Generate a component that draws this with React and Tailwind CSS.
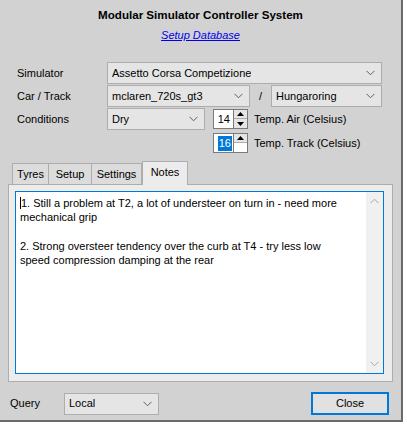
import React from 'react';

const font = { fontFamily: '"Liberation Sans", Arial, sans-serif' };

function Chevron({ dir = 'down', className = '' }) {
  return (
    <svg width="9" height="6" viewBox="0 0 9 6" className={className}>
      <polyline
        points={dir === 'down' ? '0.5,0.8 4.5,4.8 8.5,0.8' : '0.5,5.2 4.5,1.2 8.5,5.2'}
        fill="none"
        stroke="currentColor"
        strokeWidth="1"
      />
    </svg>
  );
}

function Select({ value, className = '' }) {
  return (
    <div className={`h-[22px] flex items-center justify-between bg-[#e5e5e5] border border-[#adadad] pl-[4px] pr-[6px] text-black ${className}`}>
      <span className="truncate">{value}</span>
      <Chevron className="text-[#606060] shrink-0" />
    </div>
  );
}

function Arrow({ up }) {
  return (
    <svg width="7" height="4" viewBox="0 0 7 4">
      <polygon points={up ? '0,4 3.5,0 7,4' : '0,0 3.5,4 7,0'} fill="#000" />
    </svg>
  );
}

function Spin({ value, selected, partial }) {
  return (
    <div className="flex h-[20px]">
      <div className="w-[20px] h-full bg-white border border-[#7a7a7a] border-r-0 flex items-center justify-end pr-[1px]">
        <span className={selected ? 'bg-[#0078d7] text-white px-[1px] leading-[15px]' : 'pr-[2px]'}>{value}</span>
      </div>
      <div className="w-[15px] h-full border border-[#7a7a7a] flex flex-col bg-white">
        <div className="h-[9px] bg-[#e5e5e5] border-b border-[#adadad] flex items-center justify-center">
          <Arrow up />
        </div>
        {partial ? (
          <div className="flex-1 bg-white" />
        ) : (
          <div className="flex-1 bg-[#e5e5e5] flex items-center justify-center">
            <Arrow />
          </div>
        )}
      </div>
    </div>
  );
}

export default function App() {
  return (
    <div className="w-[407px] h-[424px] flex bg-white overflow-hidden text-[11px]" style={font}>
      <div className="w-[403px] h-[422px] bg-[#d2d2d2] border-r-2 border-b-2 border-[#6a6a6a] flex flex-col text-black">
        {/* Header */}
        <div className="pt-[7px] text-center text-[11.6px] font-bold leading-[16px]">
          Modular Simulator Controller System
        </div>
        <div className="mt-[5px] text-center text-[11px] leading-[14px] italic underline text-[#0000ee]">
          Setup Database
        </div>

        {/* Form */}
        <div className="mt-[20px] pl-[17px] pr-[19px] flex flex-col gap-[1px]">
          <div className="flex items-center">
            <span className="w-[90px]">Simulator</span>
            <Select value="Assetto Corsa Competizione" className="flex-1" />
          </div>
          <div className="flex items-center">
            <span className="w-[90px]">Car / Track</span>
            <Select value="mclaren_720s_gt3" className="w-[143px]" />
            <span className="w-[21px] text-center">/</span>
            <Select value="Hungaroring" className="flex-1" />
          </div>
          <div className="flex items-center">
            <span className="w-[90px]">Conditions</span>
            <Select value="Dry" className="w-[98px]" />
            <div className="ml-[8px]">
              <Spin value="14" />
            </div>
            <span className="ml-[6px]">Temp. Air (Celsius)</span>
          </div>
          <div className="flex items-center mt-[2px]">
            <span className="w-[196px]" />
            <Spin value="16" selected partial />
            <span className="ml-[6px]">Temp. Track (Celsius)</span>
          </div>
        </div>

        {/* Tabs */}
        <div className="mt-[7px] px-[8px]">
          <div className="flex items-end h-[24px] pl-[4px]">
            <div className="w-[37px] h-[21px] flex items-center justify-center bg-[#dcdcdc] border border-b-0 border-[#adadad]">Tyres</div>
            <div className="w-[43px] h-[21px] flex items-center justify-center bg-[#dcdcdc] border border-l-0 border-b-0 border-[#adadad]">Setup</div>
            <div className="w-[50px] h-[21px] flex items-center justify-center bg-[#dcdcdc] border border-l-0 border-b-0 border-[#adadad]">Settings</div>
            <div className="w-[46px] h-[24px] flex items-center justify-center bg-[#ececec] border border-b-0 border-[#adadad] relative top-[1px] pb-[3px]">Notes</div>
          </div>
          <div className="h-[198px] bg-[#ececec] border border-[#adadad] pt-[6px] pl-[6px] pr-[8px] pb-[7px]">
            <div className="h-full border border-[#0078d7] bg-white flex">
              <div className="flex-1 pl-[4px] pr-[14px] pt-[4px] leading-[14.3px]">
                <p>
                  <span className="border-l border-black" />1. Still a problem at T2, a lot of understeer on turn in - need more mechanical grip
                </p>
                <p className="mt-[14.3px]">
                  2. Strong oversteer tendency over the curb at T4 - try less low speed compression damping at the rear
                </p>
              </div>
              <div className="w-[17px] bg-[#f0f0f0] flex flex-col items-center justify-between py-[6px] text-[#a8a8a8]">
                <Chevron dir="up" />
                <Chevron dir="down" />
              </div>
            </div>
          </div>
        </div>

        {/* Bottom */}
        <div className="mt-[10px] flex items-center pl-[10px] pr-[12px]">
          <span className="w-[54px]">Query</span>
          <Select value="Local" className="w-[95px]" />
          <div className="flex-1" />
          <div className="w-[78px] h-[23px] border-2 border-[#0078d7] bg-[#e1e1e1] flex items-center justify-center">
            <span>Close</span>
          </div>
        </div>
      </div>
      <div className="flex-1" />
    </div>
  );
}
